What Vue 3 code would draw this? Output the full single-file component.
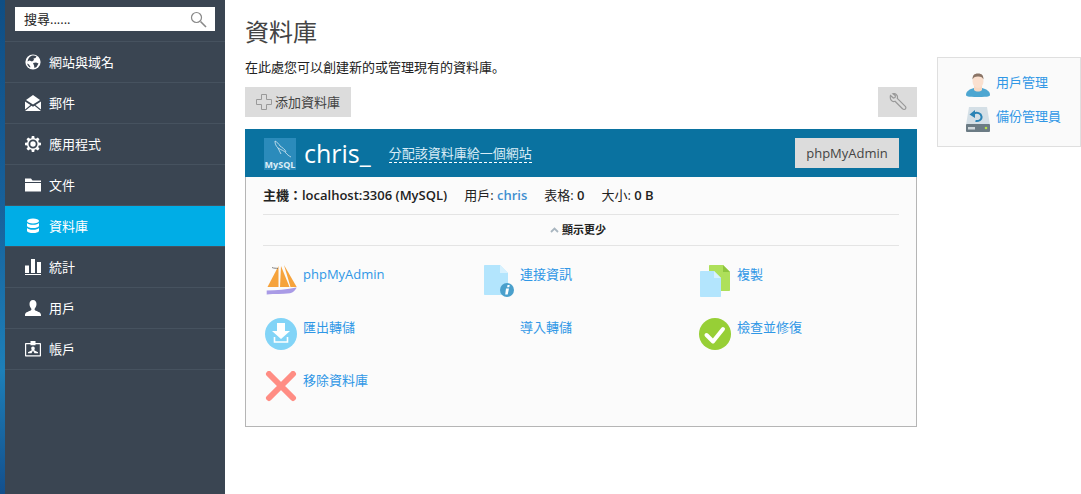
<script setup>
const navItems = [
  { label: '網站與域名', icon: 'globe' },
  { label: '郵件', icon: 'mail' },
  { label: '應用程式', icon: 'gear' },
  { label: '文件', icon: 'folder' },
  { label: '資料庫', icon: 'db', active: true },
  { label: '統計', icon: 'bars' },
  { label: '用戶', icon: 'user' },
  { label: '帳戶', icon: 'account' }
]
const tools = [
  { label: 'phpMyAdmin', icon: 'boat' },
  { label: '連接資訊', icon: 'info' },
  { label: '複製', icon: 'copy' },
  { label: '匯出轉儲', icon: 'export' },
  { label: '導入轉儲', icon: 'none' },
  { label: '檢查並修復', icon: 'check' },
  { label: '移除資料庫', icon: 'remove' }
]
</script>

<template>
  <div class="page">
    <div class="strip"></div>
    <aside class="sidebar">
      <div class="search-wrap">
        <div class="search">
          <span>搜尋......</span>
          <svg width="17" height="17" viewBox="0 0 17 17" fill="none" stroke="#888">
            <circle cx="6.5" cy="6.5" r="5" stroke-width="1.2" />
            <path d="M10.5 10.5 16 16" stroke-width="1.6" />
          </svg>
        </div>
      </div>
      <nav>
        <div v-for="item in navItems" :key="item.label" class="nav-item" :class="{ active: item.active }">
          <svg class="nav-icon" width="16" height="16" viewBox="0 0 16 16" fill="#fff">
            <template v-if="item.icon === 'globe'">
              <circle cx="8" cy="8" r="7.6" />
              <path fill="#3b4552" d="M6 2c2-.8 4-.6 5.500.2L10.500 4 8.500 4.500 9 6 7 7.500 4.500 6.500 2.500 7.500C3 5 4 3 6 2ZM8 9l3-.5 2.500 1-2 3.500-2 1L9 11.500ZM2 9.500l2 1 1.500 2.500-.5 .5C3.500 12.500 2.500 11 2 9.500Z" />
            </template>
            <template v-else-if="item.icon === 'mail'">
              <path d="M8 0 15 5 8 9.500 1 5Z" />
              <path d="M0 6.500 5.500 10 0 14.500ZM16 6.500 10.500 10 16 14.500ZM6.500 10.800 8 11.700l1.500-.9L16 16H0Z" />
            </template>
            <template v-else-if="item.icon === 'gear'">
              <path fill-rule="evenodd" d="M6.800 0h2.400l.4 2.200 1.300.6L12.800 1.500l1.700 1.700-1.300 1.900.6 1.300 2.200.4v2.400l-2.200.4-.6 1.300 1.300 1.900-1.700 1.700-1.900-1.300-1.300.6-.4 2.200H6.800l-.4-2.200-1.300-.6-1.900 1.300-1.700-1.700 1.300-1.900-.6-1.300L0 9.200V6.800l2.200-.4.6-1.300-1.300-1.900 1.700-1.700 1.900 1.300 1.300-.6ZM8 3.500a4.500 4.500 0 1 0 0 9 4.500 4.500 0 0 0 0-9Z" />
              <circle cx="8" cy="8" r="2.700" />
            </template>
            <template v-else-if="item.icon === 'folder'">
              <path d="M0 1.500h6l1.500 2H16v1.500H0ZM0 6h16v8.500H0Z" />
            </template>
            <template v-else-if="item.icon === 'db'">
              <ellipse cx="8" cy="3" rx="6" ry="2.600" />
              <path d="M2 5c1 1.200 3 1.800 6 1.800s5-.6 6-1.800v3c-.6 1.400-3 2-6 2s-5.400-.6-6-2ZM2 10c1 1.200 3 1.800 6 1.800s5-.6 6-1.800v3c-.6 1.400-3 2-6 2s-5.400-.6-6-2Z" />
            </template>
            <template v-else-if="item.icon === 'bars'">
              <path d="M0 6.500h4V14H0ZM6 0h4v14H6ZM12 3h4v11h-4ZM0 15h16v1H0Z" />
            </template>
            <template v-else-if="item.icon === 'user'">
              <path d="M8 0c2.300 0 3.500 1.700 3.500 4 0 2-1 3.700-1.800 4.800-.4.800 0 1.400 1 1.900 2.700 1 5.300 1.800 5.300 4.300v1H0v-1c0-2.500 2.600-3.300 5.300-4.300 1-.5 1.400-1.100 1-1.900C5.500 7.700 4.500 6 4.500 4 4.500 1.700 5.700 0 8 0Z" />
            </template>
            <template v-else>
              <path fill-rule="evenodd" d="M1 2h4.500V0h5v2H15c.6 0 1 .4 1 1v11.500c0 .6-.4 1-1 1H1c-.6 0-1-.4-1-1V3c0-.6.4-1 1-1Zm.2 1.200v11.100h13.600V3.200H10.500v1h-5v-1Z" />
              <path d="M8 5.500c1.300 0 1.800 1 1.800 1.800s-.4 1.500-.6 2l3.800 2v1H9.500L8 9.500 6.500 12.300H3v-1l3.800-2c-.2-.5-.6-1.200-.6-2S6.700 5.500 8 5.500Z" />
            </template>
          </svg>
          <span>{{ item.label }}</span>
        </div>
      </nav>
    </aside>

    <main class="main">
      <div class="content">
        <h1>資料庫</h1>
        <p class="desc">在此處您可以創建新的或管理現有的資料庫。</p>
        <div class="toolbar">
          <div class="btn">
            <svg width="16" height="16" viewBox="0 0 16 16" fill="none" stroke="#9a9a9a">
              <path d="M5.500.5h5v5h5v5h-5v5h-5v-5h-5v-5h5Z" />
            </svg>
            <span>添加資料庫</span>
          </div>
          <div class="btn wrench">
            <svg width="18" height="18" viewBox="0 0 18 18" fill="none" stroke="#999" stroke-width="1.200">
              <path d="M1.500 2.500 4.300 5 6 4.500 6.500 2.800 3.800.8C6 0 8.500 1.500 8.500 4c0 .6-.1 1-.2 1.300l8 8c1.200 1.300.2 3.200-1.200 3.200-.7 0-1.200-.3-1.600-.8L6 8.300c-2.800 1-5.500-1.500-4.500-5.800Z" />
            </svg>
          </div>
        </div>

        <section class="card">
          <header class="card-head">
            <div class="mysql">
              <svg width="32" height="32" viewBox="0 0 32 32" fill="none">
                <rect width="32" height="32" fill="#2b8bbb" />
                <path d="M11 3c0 3 1 5 3 7 3 2 6 2.500 8 5 1 1.500 3 3 5 4M11 3c2 1 4 3 5 5 2 1.500 5 3 6 6M14 10c1 2 2 4 3 6" stroke="#d5e9f3" stroke-width=".8" />
              </svg>
              <span>MySQL</span>
            </div>
            <span class="db-name">chris_</span>
            <span class="assign">分配該資料庫給一個網站</span>
            <div class="pma">phpMyAdmin</div>
          </header>
          <div class="card-body">
            <div class="meta">
              <span class="strong">主機：localhost:3306 (MySQL)</span>
              <span>用戶: <span class="link strong">chris</span></span>
              <span>表格: <span class="strong">0</span></span>
              <span>大小: <span class="strong">0 B</span></span>
            </div>
            <div class="toggle">
              <svg width="9" height="6" viewBox="0 0 9 6" fill="none" stroke="#a9b6c0" stroke-width="1.800">
                <path d="M1 5 4.500 1.500 8 5" />
              </svg>
              <span>顯示更少</span>
            </div>
            <div class="tools">
              <div v-for="tool in tools" :key="tool.label" class="tool">
                <svg class="tool-icon" width="36" height="36" viewBox="0 0 36 36">
                  <template v-if="tool.icon === 'boat'">
                    <path fill="#f6a33c" d="M15.500 1V22H4.500Z" />
                    <path fill="#f6a33c" d="M18 1 26.500 22H17Z" />
                    <path fill="#f6a33c" d="M21 0 33.700 22h-6.200Z" />
                    <path fill="#a99be6" d="M3.700 25.500c10 0 20-1 30-3-1.500 3-3.500 5-6.700 5.800-8 1-15 .5-23.300 1.200Z" />
                    <path fill="none" stroke="#666" stroke-width=".8" d="M9 2.500c2 1 4 .5 6 1" />
                  </template>
                  <template v-else-if="tool.icon === 'info'">
                    <path fill="#b3e5fd" d="M5 0h15l8 8v21c0 .6-.4 1-1 1H5c-.6 0-1-.4-1-1V1c0-.6.4-1 1-1Z" />
                    <path fill="#d7f1fe" d="M20 0 28 8H20Z" />
                    <circle cx="27" cy="25" r="7" fill="#4aa0cc" />
                    <path fill="#fff" d="M26 23.500h3l-1.300 6h-2.500ZM27.500 20h2.200l-.4 2.300h-2.200Z" />
                  </template>
                  <template v-else-if="tool.icon === 'copy'">
                    <path fill="#aee05a" d="M13 0h13l7 7v18c0 .6-.4 1-1 1H13c-.6 0-1-.4-1-1V1c0-.6.4-1 1-1Z" />
                    <path fill="#8ec63f" d="M26 0 33 7H26Z" />
                    <path fill="#b3e5fd" d="M4 6h13l7 7v18c0 .6-.4 1-1 1H4c-.6 0-1-.4-1-1V7c0-.6.4-1 1-1Z" />
                    <path fill="#d7f1fe" d="M17 6 24 13H17Z" />
                  </template>
                  <template v-else-if="tool.icon === 'export'">
                    <circle cx="18" cy="16" r="16" fill="#82d4f7" />
                    <path fill="#fff" d="M14 5h8v8h5l-9 8-9-8h5Z" />
                    <path fill="none" stroke="#fff" stroke-width="1.600" d="M11.500 19v5h13v-5" />
                  </template>
                  <template v-else-if="tool.icon === 'check'">
                    <circle cx="18" cy="16" r="16" fill="#97cf36" />
                    <path fill="none" stroke="#fff" stroke-width="4" stroke-linecap="round" stroke-linejoin="round" d="M9.500 17l6.500 6.500L26 11" />
                  </template>
                  <template v-else-if="tool.icon === 'remove'">
                    <path fill="none" stroke="#ff8d84" stroke-width="6" stroke-linecap="round" d="M6 3 30 27M30 3 6 27" />
                  </template>
                </svg>
                <span class="link">{{ tool.label }}</span>
              </div>
            </div>
          </div>
        </section>
      </div>

      <aside class="side-panel">
        <div class="side-row">
          <svg width="24" height="24" viewBox="0 0 24 24">
            <path fill="#4da6d1" d="M0 22c0-4 4-6 8-7h8c4 1 8 3 8 7 0 1-1 2-12 2S0 23 0 22Z" />
            <path fill="#f8d9c4" d="M8 12h8v5c-2 2-6 2-8 0Z" />
            <ellipse cx="12" cy="8" rx="5.500" ry="7" fill="#fbe0cf" />
            <path fill="#8a7466" d="M6.500 6.500C6.500 2.500 8 .5 12 .5s5.500 2 5.500 6c-1-2-2-3-5.500-3s-4.500 1-5.500 3Z" />
          </svg>
          <span class="link">用戶管理</span>
        </div>
        <div class="side-row">
          <svg width="24" height="25" viewBox="0 0 24 25">
            <path fill="#d4dfe6" d="M3 0h18l3 18H0Z" />
            <rect y="17" width="24" height="8" rx="1" fill="#6b7b84" />
            <rect x="2" y="20" width="7" height="2.500" fill="#cfd8dc" />
            <circle cx="20" cy="21" r="1.300" fill="#b5e04a" />
            <path fill="none" stroke="#2b83b5" stroke-width="2" d="M8 6.500c3-1.500 7-.5 7.500 3s-3 5-6 4.500" />
            <path fill="#2b83b5" d="M3.500 7.500 9 3v8Z" />
          </svg>
          <span class="link">備份管理員</span>
        </div>
      </aside>
    </main>
  </div>
</template>

<style>
body { margin: 0; overflow: hidden; background: #fff; }
</style>

<style scoped>
.page {
  display: flex;
  width: 1081px;
  height: 494px;
  overflow: hidden;
  font-family: "Open Sans", "Noto Sans CJK JP", sans-serif;
  font-size: 13px;
  line-height: 18px;
  color: #222;
}
.strip {
  width: 5px;
  flex: none;
  background: linear-gradient(180deg, #0f4e84 0%, #17609a 40%, #1d7fb8 75%, #134f8c 100%);
}
.sidebar {
  width: 220px;
  flex: none;
  background: #3a4552;
  color: #fff;
}
.search-wrap {
  padding: 7px 10px 10px;
  border-bottom: 1px solid #46525f;
}
.search {
  height: 24px;
  background: #fff;
  color: #222;
  padding: 0 8px 0 9px;
  display: flex;
  align-items: center;
  justify-content: space-between;
}
.nav-item {
  height: 40px;
  border-bottom: 1px solid #46525f;
  display: flex;
  align-items: center;
  padding-left: 20px;
  gap: 8px;
}
.nav-item.active {
  background: #00ade6;
}
.main {
  flex: 1;
  display: flex;
  align-items: flex-start;
  padding-left: 20px;
  min-width: 0;
}
.content {
  width: 672px;
  flex: none;
}
h1 {
  margin: 0;
  padding-top: 15px;
  font-size: 24px;
  font-weight: 400;
  line-height: 34px;
  color: #444;
}
.desc {
  margin: 9px 0 0;
  color: #222;
}
.toolbar {
  display: flex;
  justify-content: space-between;
  margin-top: 11px;
}
.btn {
  height: 30px;
  background: #dcdcdc;
  display: flex;
  align-items: center;
  gap: 3px;
  padding: 0 11px;
  color: #444;
}
.wrench {
  width: 39px;
  padding: 0;
  justify-content: center;
  box-sizing: border-box;
}
.card {
  margin-top: 12px;
  border: 1px solid #b5b5b5;
  border-top: none;
  background: #fbfbfb;
  height: 298px;
  box-sizing: border-box;
}
.card-head {
  height: 48px;
  margin: 0 -1px;
  background: #0a72a0;
  display: flex;
  align-items: center;
  padding: 0 18px 0 19px;
  color: #fff;
}
.mysql {
  position: relative;
  width: 32px;
  height: 32px;
  margin-top: 1px;
}
.mysql svg { display: block; }
.mysql span {
  position: absolute;
  left: 0;
  right: 0;
  bottom: 0;
  text-align: center;
  font-size: 9px;
  font-weight: 700;
  line-height: 11px;
  color: #dceef7;
}
.db-name {
  font-size: 25px;
  line-height: 34px;
  margin-left: 8px;
}
.assign {
  margin-left: 18px;
  color: #d8ecf6;
  border-bottom: 1px dashed #fff;
  line-height: 17px;
  margin-top: 2px;
}
.pma {
  margin-left: auto;
  width: 104px;
  height: 30px;
  background: #dcdcdc;
  color: #444;
  display: flex;
  align-items: center;
  justify-content: center;
}
.card-body {
  padding: 0 17px;
}
.meta {
  display: flex;
  gap: 17px;
  height: 38px;
  box-sizing: border-box;
  padding-bottom: 2px;
  align-items: center;
  border-bottom: 1px solid #e4e4e4;
}
.strong { font-weight: 600; color: #222; }
.link { color: #2f97e6; }
.link.strong { color: #3f8fd0; }
.toggle {
  height: 30px;
  border-bottom: 1px solid #e4e4e4;
  display: flex;
  align-items: center;
  justify-content: center;
  gap: 3px;
  padding-right: 6px;
  font-size: 11px;
  font-weight: 600;
}
.tools {
  display: grid;
  grid-template-columns: repeat(3, 217px);
  grid-auto-rows: 53px;
  padding-top: 19px;
}
.tool {
  display: flex;
  align-items: flex-start;
  gap: 4px;
}
.tool-icon {
  flex: none;
}
.side-panel {
  width: 144px;
  flex: none;
  margin: 57px 0 0 20px;
  height: 90px;
  box-sizing: border-box;
  border: 1px solid #dfdfdf;
  background: #fafafa;
  padding: 15px 0 0 28px;
  display: flex;
  flex-direction: column;
  gap: 10px;
}
.side-row {
  display: flex;
  align-items: flex-start;
  gap: 6px;
}
</style>
